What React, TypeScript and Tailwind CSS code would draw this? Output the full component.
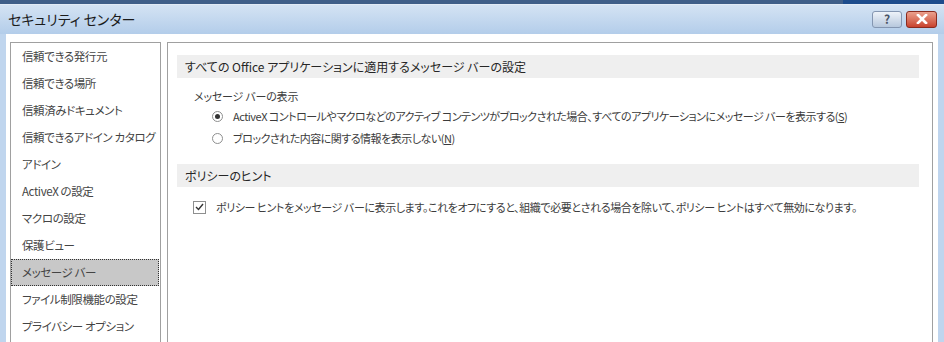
import React from "react";

const navItems = [
  "信頼できる発行元",
  "信頼できる場所",
  "信頼済みドキュメント",
  "信頼できるアドイン カタログ",
  "アドイン",
  "ActiveX の設定",
  "マクロの設定",
  "保護ビュー",
  "メッセージ バー",
  "ファイル制限機能の設定",
  "プライバシー オプション",
];

const Radio = ({ checked }: { checked?: boolean }) => (
  <span className="flex h-[11px] w-[11px] shrink-0 items-center justify-center rounded-full border border-[#8e8f8f] bg-white">
    {checked && <span className="h-[5px] w-[5px] rounded-full bg-[#333]" />}
  </span>
);

const App: React.FC = () => {
  return (
    <div className="flex h-[342px] w-[944px] flex-col overflow-hidden whitespace-nowrap bg-[#bfd5ee] text-[12px] text-[#3b3b3b] [font-family:'Noto_Sans_CJK_JP',sans-serif] [font-feature-settings:'palt']">
      {/* top strip */}
      <div className="flex h-[4px]">
        <div className="flex-1 bg-[#405f88]" />
        <div className="w-[101px] bg-[#1d4c8c]" />
      </div>
      <div className="h-[1px] bg-[#e2ebf5]" />

      {/* title bar */}
      <div className="flex h-[29px] items-center justify-between bg-gradient-to-b from-[#d4e3f3] to-[#b3cdea] pl-[8px] pr-[7px]">
        <span className="text-[14px] text-[#1b1b1b]">セキュリティ センター</span>
        <div className="flex gap-[4px] pb-[1px]">
          <div className="flex h-[17px] w-[30px] items-center justify-center rounded-[3px] border border-[#8496b1] bg-gradient-to-b from-[#eef3f9] to-[#b7c8dd] text-[12px] font-bold leading-none text-[#4a5566]">
            ?
          </div>
          <div className="flex h-[17px] w-[31px] items-center justify-center rounded-[3px] border border-[#8a2b1f] bg-gradient-to-b from-[#eaa08d] to-[#c8412d]">
            <svg width="12" height="10" viewBox="0 0 12 10">
              <path d="M2 1 L10 9 M10 1 L2 9" stroke="#fff" strokeWidth="2.6" strokeLinecap="square" />
            </svg>
          </div>
        </div>
      </div>

      {/* body */}
      <div className="flex flex-1 px-[6px]">
        <div className="flex flex-1 gap-[6px] bg-white pl-[4px] pr-[5px] pt-[8px]">
          {/* nav list */}
          <div className="flex w-[151px] flex-col border border-b-0 border-[#a0a0a0] text-[11.5px] tracking-[-0.4px] text-[#444]">
            {navItems.map((item) =>
              item === "メッセージ バー" ? (
                <div
                  key={item}
                  className="mr-[1px] flex h-[27px] items-center border border-dotted border-[#333] bg-[#c8c8c8] pl-[10px]"
                >
                  {item}
                </div>
              ) : (
                <div key={item} className="flex h-[27px] items-center pl-[11px]">
                  {item}
                </div>
              )
            )}
          </div>

          {/* settings panel */}
          <div className="flex flex-1 flex-col border border-b-0 border-[#a0a0a0] pl-[9px] pr-[13px] pt-[12px]">
            <div className="flex h-[23px] items-center bg-[#efefef] pl-[8px] text-[#262626]">
              すべての Office アプリケーションに適用するメッセージ バーの設定
            </div>
            <div className="mt-[9px] flex h-[18px] items-center pl-[17px] text-[11px] tracking-[-0.2px]">
              メッセージ バーの表示
            </div>
            <div className="flex h-[22px] items-center gap-[10px] pl-[35px] text-[11px] tracking-[-0.5px]">
              <Radio checked />
              <span>
                ActiveX コントロールやマクロなどのアクティブ コンテンツがブロックされた場合、すべてのアプリケーションにメッセージ バーを表示する(<span className="underline">S</span>)
              </span>
            </div>
            <div className="flex h-[23px] items-center gap-[10px] pl-[35px] text-[11px] tracking-[-0.5px]">
              <Radio />
              <span>
                ブロックされた内容に関する情報を表示しない(<span className="underline">N</span>)
              </span>
            </div>

            <div className="mt-[14px] flex h-[23px] items-center bg-[#efefef] pl-[8px] text-[#262626]">
              ポリシーのヒント
            </div>
            <div className="mt-[9px] flex h-[22px] items-center gap-[10px] pl-[16px] text-[11px] tracking-[-0.4px]">
              <span className="flex h-[13px] w-[13px] shrink-0 items-center justify-center border border-[#8e8f8f] bg-white">
                <svg width="9" height="8" viewBox="0 0 9 8">
                  <path d="M1 4 L3.5 6.5 L8 1" fill="none" stroke="#333" strokeWidth="1.4" />
                </svg>
              </span>
              <span>
                ポリシー ヒントをメッセージ バーに表示します。これをオフにすると、組織で必要とされる場合を除いて、ポリシー ヒントはすべて無効になります。
              </span>
            </div>
          </div>
        </div>
      </div>
    </div>
  );
};

export default App;
